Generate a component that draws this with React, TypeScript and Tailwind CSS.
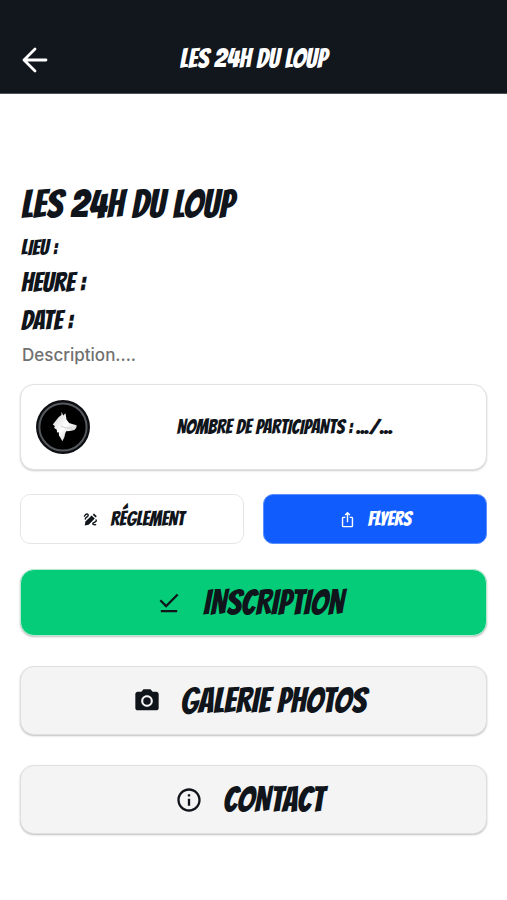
import type { ReactNode } from "react";
import { MdDownloadDone, MdInfoOutline, MdIosShare, MdPhotoCamera } from "react-icons/md";

const display = "font-['Bangers','Liberation_Sans_Narrow','Liberation_Sans',sans-serif] font-normal";

function BackIcon() {
  return (
    <svg viewBox="0 0 26 26" className="size-[26px]" fill="none" stroke="currentColor" strokeWidth="2.8" strokeLinecap="round" strokeLinejoin="round" aria-hidden="true">
      <path d="M24 13H2M13 2 2 13l11 11" />
    </svg>
  );
}

function PenIcon() {
  return (
    <svg viewBox="0 0 16 16" className="size-[15px]" fill="none" stroke="currentColor" strokeLinecap="round" aria-hidden="true">
      <path d="M1.5 4.5C3 1.5 5.5 1.5 5.6 3.5S2 5.5 2.5 7.5M14 8.5c1 2-3 2.5-3.5 3.5s1 2 3 1.5" strokeWidth="1.5" />
      <path d="m1.8 14.4.8-4.4 6.6-6.2 3.4 3.2-6.6 6.6z" fill="currentColor" stroke="none" />
      <path d="m10.4 2.8 1.3-1.2 3 3-1.3 1.3z" fill="currentColor" stroke="none" />
    </svg>
  );
}

function WolfBadge() {
  return (
    <svg viewBox="0 0 54 54" className="size-[54px] shrink-0" role="img" aria-label="Loup">
      <defs>
        <linearGradient id="fur" x1="0" y1="0" x2="1" y2="1">
          <stop offset="0" stopColor="#cfcfcf" />
          <stop offset=".5" stopColor="#ffffff" />
          <stop offset="1" stopColor="#b5b5b5" />
        </linearGradient>
      </defs>
      <circle cx="27" cy="27" r="27" fill="#0b0d10" />
      <circle cx="27" cy="27" r="23.6" fill="#000" stroke="#55595e" strokeWidth="2" />
      <path
        d="m25.6 11.8 1.6 3.8 2.3-2.4 1 6.2 2.6 3.6 3 1 4.6 1.2-.4 2.6-1.8 2.2-4.4 1-4 .2-1 2.6-.8 3.6-2 3.8-1.8-3.4-1.5-2.4-.2-3.2-1.8.4-.2-2.8-2.6-1.8.6-2-2-1.6 3.2-4 2.8-3.4 2.6-2z"
        fill="url(#fur)"
      />
      <path d="m25 26 4 1.8 7 .2" fill="none" stroke="#c4c4c4" strokeWidth=".8" />
    </svg>
  );
}

function LargeButton({ icon, green = false, children }: { icon: ReactNode; green?: boolean; children: ReactNode }) {
  const look = green
    ? "h-[67px] border-[#b5ead1] bg-[#05cc79]"
    : "h-[69px] border-[#e0e0e0] bg-[#f4f4f4]";
  return (
    <button
      type="button"
      className={`${display} ${look} flex w-full items-center justify-center gap-5 rounded-[14px] border pr-2 text-[35px] leading-10 shadow-[0_1px_2px_rgba(0,0,0,0.25)]`}
    >
      {icon}
      <span>{children}</span>
    </button>
  );
}

export default function App() {
  return (
    <div className="min-h-screen bg-white text-[#10141b]">
      <header className="grid h-[94px] grid-cols-[1fr_auto_1fr] items-end border-b border-[#50545a] bg-[#12161d] px-[22px] pb-5 text-white">
        <button type="button" aria-label="Retour" className="justify-self-start">
          <BackIcon />
        </button>
        <span className={`${display} text-[27px] leading-7`}>LES 24H DU LOUP</span>
      </header>

      <main className="px-5 pt-[91px] pb-16 sm:px-8">
        <section className={`${display} pl-px`}>
          <h1 className="text-[39px] leading-10">LES 24H DU LOUP</h1>
          <p className="mt-[11px] text-[22px] leading-6">LIEU :</p>
          <p className="mt-[9px] text-[27px] leading-7">HEURE :</p>
          <p className="mt-2.5 text-[27px] leading-7">DATE :</p>
        </section>
        <p className="mt-2 pl-0.5 font-['Inter',sans-serif] text-[17px] leading-6 font-medium text-[#707070]">Description....</p>

        <section className="mt-[17px] flex h-[86px] items-center rounded-[14px] border border-[#e2e2e2] bg-white px-[15px] shadow-[0_1px_2px_rgba(0,0,0,0.2)]">
          <WolfBadge />
          <p className={`${display} grow pl-2 text-center text-[20px] leading-6`}>NOMBRE DE PARTICIPANTS : .../...</p>
        </section>

        <div className={`${display} mt-6 grid grid-cols-2 gap-[19px] text-[20px] leading-6`}>
          <button type="button" className="flex h-[50px] items-center justify-center gap-3 rounded-[10px] border border-[#e6e6e6] bg-white pl-1">
            <PenIcon />
            <span>RÉGLEMENT</span>
          </button>
          <button type="button" className="flex h-[50px] items-center justify-center gap-3 rounded-[10px] border border-[#5b8ffb] bg-[#105cfd] text-white">
            <MdIosShare className="size-[17px]" aria-hidden="true" />
            <span>FLYERS</span>
          </button>
        </div>

        <div className="mt-[25px] flex flex-col gap-[30px]">
          <LargeButton green icon={<MdDownloadDone className="size-7" aria-hidden="true" />}>INSCRIPTION</LargeButton>
          <LargeButton icon={<MdPhotoCamera className="size-7" aria-hidden="true" />}>GALERIE PHOTOS</LargeButton>
          <LargeButton icon={<MdInfoOutline className="size-7" aria-hidden="true" />}>CONTACT</LargeButton>
        </div>
      </main>
    </div>
  );
}
